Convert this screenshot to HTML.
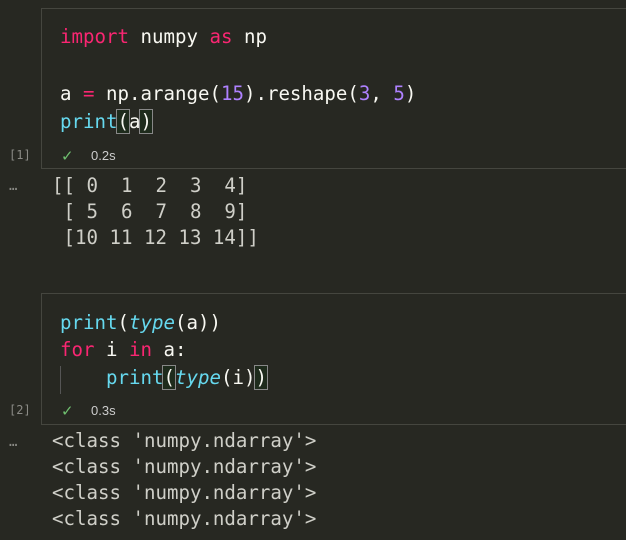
<!DOCTYPE html>
<html><head><style>
body{margin:0;width:626px;height:540px;background:#272822;overflow:hidden;position:relative;font-family:"DejaVu Sans Mono","Liberation Mono",monospace;}
.cell{position:absolute;left:41px;right:-2px;border:1px solid #45463f;}
.l{position:absolute;white-space:pre;font-size:19.1px;color:#f8f8f2;line-height:28px;}
.o{position:absolute;white-space:pre;font-size:19.1px;color:#cfcfc8;line-height:26px;left:52px;}
.k{color:#f92672}.f{color:#66d9ef}.i{color:#66d9ef;font-style:italic}.n{color:#ae81ff}
.b{outline:1px solid #888;background:#1e2b1c}
.st{position:absolute;font-family:"Liberation Sans",sans-serif;font-size:13px;color:#ccc;}
.ec{position:absolute;left:9px;font-size:12px;color:#8a8a85;}
</style></head><body>
<div class="cell" style="top:8px;height:159px"></div>
<div class="l" style="left:60px;top:23px"><span class="k">import</span> numpy <span class="k">as</span> np</div>
<div class="l" style="left:60px;top:80px">a <span class="k">=</span> np.arange(<span class="n">15</span>).reshape(<span class="n">3</span>, <span class="n">5</span>)</div>
<div class="l" style="left:60px;top:108px"><span class="f">print</span><span class="b">(</span>a<span class="b">)</span></div>
<div class="st" style="left:61px;top:147px;color:#6fbf6f;font-size:15px">✓</div>
<div class="st" style="left:91px;top:148px">0.2s</div>
<div class="ec" style="top:148px">[1]</div>
<div class="ec" style="top:178px;font-size:14px">…</div>
<div class="o" style="top:173px">[[ 0  1  2  3  4]
 [ 5  6  7  8  9]
 [10 11 12 13 14]]</div>

<div class="cell" style="top:293px;height:130px"></div>
<div class="l" style="left:60px;top:309px"><span class="f">print</span>(<span class="i">type</span>(a))</div>
<div class="l" style="left:60px;top:336px"><span class="k">for</span> i <span class="k">in</span> a:</div>
<div style="position:absolute;left:60px;top:366px;width:1px;height:28px;background:#555"></div>
<div class="l" style="left:60px;top:364px">    <span class="f">print</span><span class="b">(</span><span class="i">type</span>(i)<span class="b">)</span></div>
<div class="st" style="left:61px;top:402px;color:#6fbf6f;font-size:15px">✓</div>
<div class="st" style="left:91px;top:403px">0.3s</div>
<div class="ec" style="top:403px">[2]</div>
<div class="ec" style="top:434px;font-size:14px">…</div>
<div class="o" style="top:428px">&lt;class 'numpy.ndarray'&gt;
&lt;class 'numpy.ndarray'&gt;
&lt;class 'numpy.ndarray'&gt;
&lt;class 'numpy.ndarray'&gt;</div>
</body></html>
